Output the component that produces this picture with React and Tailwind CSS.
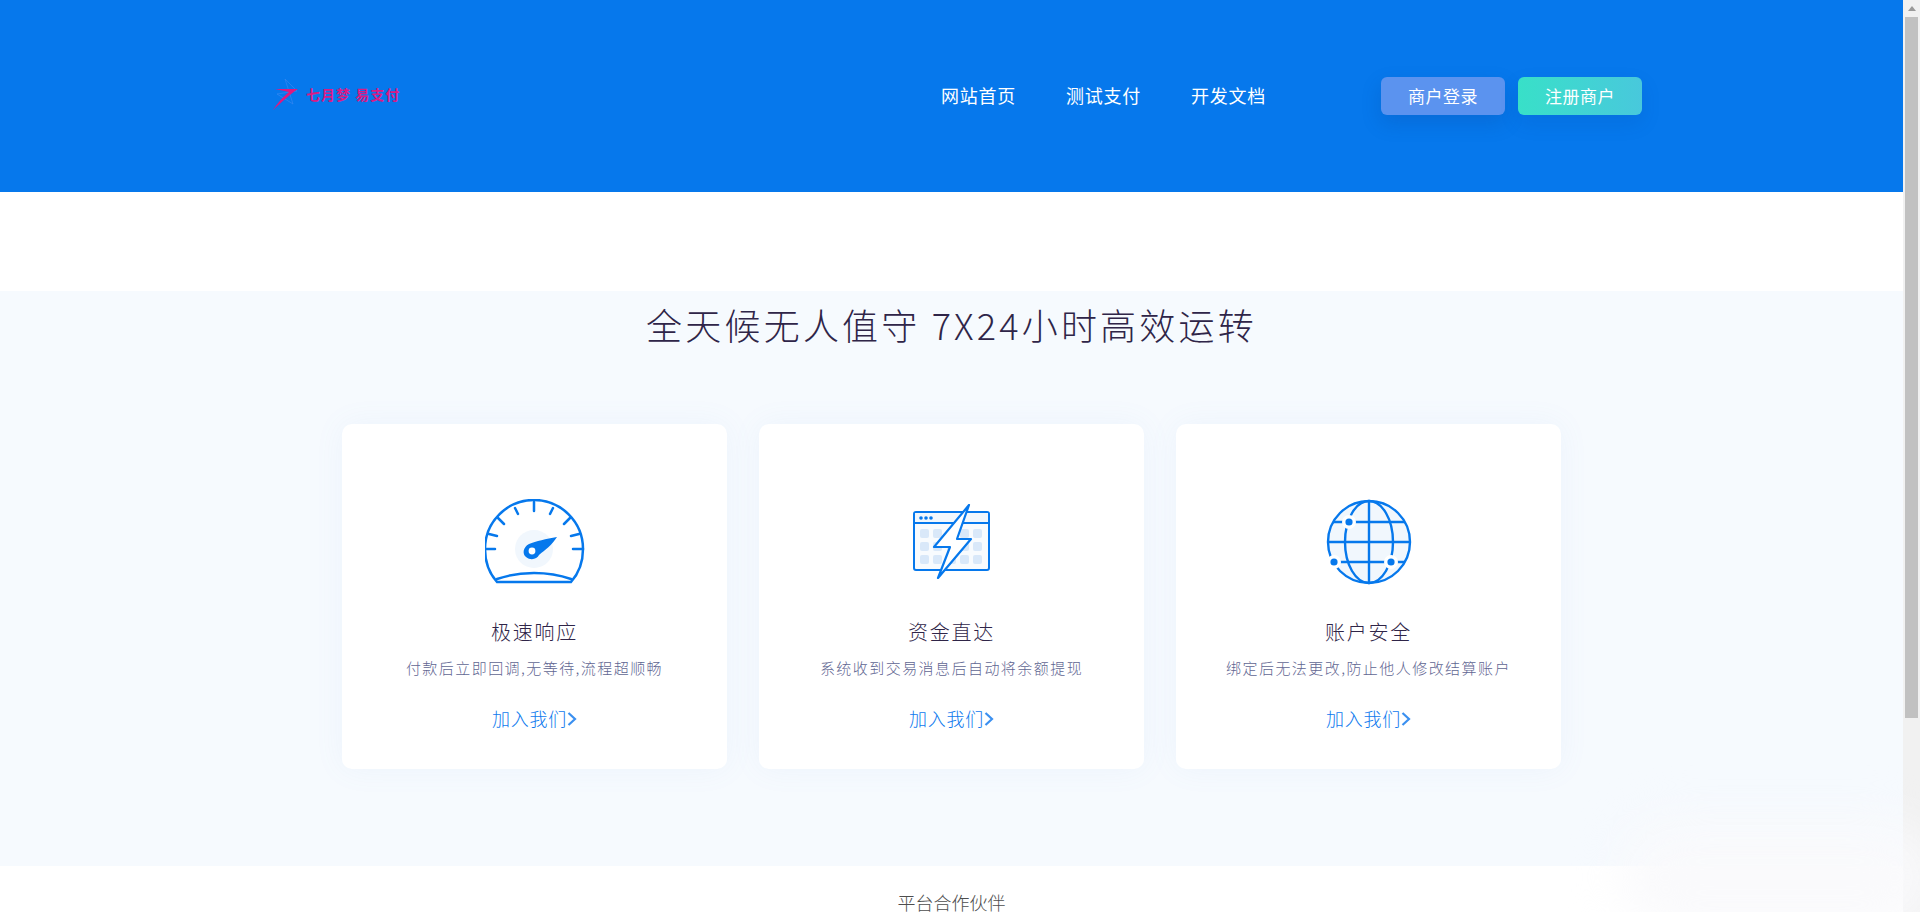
import React from 'react';

const FONT = { fontFamily: '"Noto Sans CJK SC", "Liberation Sans", sans-serif' };

const GaugeIcon = () => (
  <svg width="100" height="86" viewBox="0 0 100 86" fill="none" stroke="#0678ec" strokeWidth="2.5" strokeLinecap="round">
    <circle cx="49" cy="50" r="19" fill="#f1f7fd" stroke="none" />
    <path d="M12 83 C4 74 0 62 0 50 A49 49 0 0 1 98 50 C98 62 94 74 86 83 Z" />
    <path d="M12 80 C35 72 63 72 86 80" />
    <path d="M0 50 H10 M88 50 H98 M4 35 L12 37 M94 35 L86 37 M13 19 L19 25 M85 19 L79 25 M30 9 L33 15 M68 9 L65 15 M49 3 V12" />
    <path d="M72 38 C61 40 51 42 44 45 C38 48 37 55 41 58 C46 62 52 60 54 56 C60 51 67 46 72 38 Z" fill="#0678ec" stroke="none" />
    <circle cx="47" cy="52" r="3.4" fill="#fff" stroke="none" />
  </svg>
);

const BoltIcon = () => (
  <svg width="80" height="76" viewBox="0 0 80 76" fill="none" stroke="#0678ec" strokeWidth="2" strokeLinejoin="round">
    <rect x="2" y="8" width="75" height="58" rx="2" fill="#f8fbfe" />
    <rect x="3" y="9" width="73" height="10" fill="#f1f7fd" stroke="none" />
    <path d="M2 19 H77" />
    <circle cx="9" cy="14" r="1.8" fill="#0678ec" stroke="none" />
    <circle cx="14" cy="14" r="1.8" fill="#0678ec" stroke="none" />
    <circle cx="19" cy="14" r="1.8" fill="#0678ec" stroke="none" />
    <g fill="#d9e8f9" stroke="none">
      <rect x="8" y="25" width="9" height="9" rx="2" />
      <rect x="21" y="25" width="9" height="9" rx="2" />
      <rect x="35" y="25" width="9" height="9" rx="2" />
      <rect x="48" y="25" width="9" height="9" rx="2" />
      <rect x="61" y="25" width="9" height="9" rx="2" />
      <rect x="8" y="38" width="9" height="9" rx="2" />
      <rect x="21" y="38" width="9" height="9" rx="2" />
      <rect x="35" y="38" width="9" height="9" rx="2" />
      <rect x="48" y="38" width="9" height="9" rx="2" />
      <rect x="61" y="38" width="9" height="9" rx="2" />
      <rect x="8" y="51" width="9" height="9" rx="2" />
      <rect x="21" y="51" width="9" height="9" rx="2" />
      <rect x="35" y="51" width="9" height="9" rx="2" />
      <rect x="48" y="51" width="9" height="9" rx="2" />
      <rect x="61" y="51" width="9" height="9" rx="2" />
    </g>
    <path d="M57 1 L22 43 H38 L26 74 L59 35 H45 Z" fill="#fff" strokeWidth="2.2" />
  </svg>
);

const GlobeIcon = () => (
  <svg width="86" height="86" viewBox="0 0 86 86" fill="none" stroke="#0678ec" strokeWidth="2.4">
    <circle cx="43" cy="43" r="41" fill="#f1f7fd" />
    <ellipse cx="43" cy="43" rx="24" ry="41" />
    <path d="M43 2 V84 M2 43 H84 M7 23 H79 M7 63 H79" />
    <circle cx="23" cy="23" r="7" fill="#fff" stroke="none" />
    <circle cx="23" cy="23" r="3.6" fill="#0678ec" stroke="none" />
    <circle cx="65" cy="63" r="7" fill="#fff" stroke="none" />
    <circle cx="65" cy="63" r="3.6" fill="#0678ec" stroke="none" />
    <circle cx="8" cy="63" r="7" fill="#fff" stroke="none" />
    <circle cx="8" cy="63" r="3.6" fill="#0678ec" stroke="none" />
  </svg>
);

const features = [
  { title: '极速响应', desc: '付款后立即回调,无等待,流程超顺畅', icon: <GaugeIcon /> },
  { title: '资金直达', desc: '系统收到交易消息后自动将余额提现', icon: <BoltIcon /> },
  { title: '账户安全', desc: '绑定后无法更改,防止他人修改结算账户', icon: <GlobeIcon /> },
];

const FeatureCard = ({ title, desc, icon }) => (
  <div className="w-[385px] h-[345px] bg-white rounded-[10px] shadow-[0_0_30px_rgba(120,160,220,0.07)] flex flex-col items-center">
    <div className="mt-[75px] h-[86px] flex items-center justify-center">{icon}</div>
    <h3 className="mt-[33px] text-[20px] leading-[28px] font-light tracking-[1.8px] text-[#2f2548]">{title}</h3>
    <p className="mt-[10px] text-[15px] leading-[24px] font-light tracking-[1.45px] text-[#5f6692]">{desc}</p>
    <a className="mt-[24px] text-[18px] leading-[28px] font-light tracking-[0.8px] text-[#0f7aee] flex items-center">
      加入我们
      <svg width="10" height="17" viewBox="0 0 10 17" fill="none" stroke="#3b90f0" strokeWidth="2.2">
        <path d="M1.5 3 L8 9 L1.5 15" />
      </svg>
    </a>
  </div>
);

const Logo = () => (
  <div className="flex items-center w-[200px] mb-[4px]">
    <svg width="25" height="31" viewBox="0 0 25 31" className="shrink-0">
      <path d="M12 0 L20 25 L4 15 L24 12 Z" fill="none" stroke="#3d88f0" strokeOpacity="0.6" strokeWidth="1" />
      <path d="M2 10 H25 C17 15 8 24 0 31 C5 23 11 17 16 13 Z" fill="#e0187f" />
    </svg>
    <span className="ml-[8px] text-[14px] leading-[20px] font-bold tracking-[1px] whitespace-pre text-[#d81b86]">七月梦 易支付</span>
  </div>
);

export default function App() {
  return (
    <div className="relative h-screen flex overflow-hidden bg-white" style={FONT}>
      <main className="flex-1 min-w-0 overflow-hidden">
        <header className="h-[192px] bg-[#0678ec] flex items-center pl-[273px]">
          <Logo />
          <nav className="ml-[468px] mb-[2px] flex gap-[50px] text-[18px] leading-[28px] font-normal tracking-[0.75px] text-white">
            <a>网站首页</a>
            <a>测试支付</a>
            <a>开发文档</a>
          </nav>
          <div className="ml-[115px] flex gap-[13px]">
            <button className="w-[124px] h-[38px] rounded-[6px] bg-[#5b93ef] text-white text-[17px] font-normal tracking-[0.5px] shadow-[0_8px_20px_rgba(10,60,140,0.2)]">商户登录</button>
            <button className="w-[124px] h-[38px] rounded-[6px] bg-gradient-to-r from-[#38e0c8] to-[#48c8dc] text-white text-[17px] font-normal tracking-[0.5px] shadow-[0_8px_20px_rgba(10,60,140,0.12)]">注册商户</button>
          </div>
        </header>

        <div className="h-[99px]" />

        <section className="h-[575px] bg-[#f6fafe] flex flex-col items-center">
          <h2 className="mt-[6px] h-[54px] text-[36px] leading-[54px] font-light tracking-[3.2px] text-[#2f2548]">全天候无人值守 7X24小时高效运转</h2>
          <div className="mt-[73px] flex gap-[32px]">
            {features.map((f) => (
              <FeatureCard key={f.title} {...f} />
            ))}
          </div>
        </section>

        <p className="mt-[22px] text-center text-[18px] leading-[28px] font-light text-[#4d4d4d]">平台合作伙伴</p>
      </main>

      <aside className="w-[17px] shrink-0 bg-[#f1f1f1] flex flex-col">
        <div className="h-[17px] flex items-center justify-center">
          <div className="w-0 h-0 border-x-[4px] border-x-transparent border-b-[5px] border-b-[#9a9a9a]" />
        </div>
        <div className="h-[701px] mx-[2px] bg-[#c1c1c1]" />
      </aside>

      {/* faint smudge in the bottom right corner */}
      <div className="absolute -right-[20px] -bottom-[20px] w-[320px] h-[110px] bg-[#fafafc]/90 blur-xl rounded-full pointer-events-none" />
    </div>
  );
}
